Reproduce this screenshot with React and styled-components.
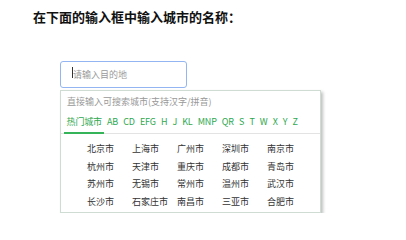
import styled, { createGlobalStyle } from 'styled-components';

const GlobalStyle = createGlobalStyle`
  body {
    margin: 0;
    background: #fff;
    font-family: "Noto Sans CJK SC", "Noto Sans", sans-serif;
  }
`;

const tabs = ['热门城市', 'AB', 'CD', 'EFG', 'H', 'J', 'KL', 'MNP', 'QR', 'S', 'T', 'W', 'X', 'Y', 'Z'];

const cities = [
  '北京市', '上海市', '广州市', '深圳市', '南京市',
  '杭州市', '天津市', '重庆市', '成都市', '青岛市',
  '苏州市', '无锡市', '常州市', '温州市', '武汉市',
  '长沙市', '石家庄市', '南昌市', '三亚市', '合肥市',
];

const App = () => {
  return (
    <Page>
      <GlobalStyle />
      <Title>在下面的输入框中输入城市的名称：</Title>
      <SearchBox>
        <InputWrap>
          <Caret />
          <CityInput placeholder='请输入目的地' />
        </InputWrap>
        <Panel>
          <Hint>直接输入可搜索城市(支持汉字/拼音)</Hint>
          <TabRow>
            {tabs.map((t, idx) => (
              <Tab key={t} $active={idx === 0}>
                {t}
              </Tab>
            ))}
          </TabRow>
          <CityGrid>
            {cities.map((c) => (
              <City key={c}>{c}</City>
            ))}
          </CityGrid>
        </Panel>
      </SearchBox>
    </Page>
  );
};

const Page = styled.div`
  padding: 9px 0 0 33px;
`;

const Title = styled.h3`
  margin: 0;
  font-size: 13px;
  line-height: 16px;
  font-weight: 700;
  color: #111;
`;

const SearchBox = styled.div`
  margin: 34px 0 0 27px;
  width: 262px;
`;

const InputWrap = styled.div`
  position: relative;
  width: 127px;
  height: 27px;
`;

const Caret = styled.span`
  position: absolute;
  left: 12px;
  top: 8px;
  width: 1px;
  height: 11px;
  background: #333;
`;

const CityInput = styled.input`
  box-sizing: border-box;
  width: 100%;
  height: 100%;
  border: 1px solid #93b6f2;
  border-radius: 3px;
  padding: 0 0 0 12px;
  font-family: inherit;
  font-size: 9px;
  outline: none;
  &::placeholder {
    color: #9a9a9a;
  }
`;

const Panel = styled.div`
  box-sizing: border-box;
  margin-top: 4px;
  width: 261px;
  height: 123px;
  border: 1px solid #cfdcd4;
  box-shadow: 2px 2px 3px rgba(0, 0, 0, 0.25);
  background: #fff;
`;

const Hint = styled.div`
  padding: 4px 0 0 6px;
  height: 14px;
  font-size: 9px;
  line-height: 14px;
  color: #999;
`;

const TabRow = styled.div`
  display: flex;
  margin-top: 6px;
  padding-left: 3px;
  border-bottom: 1px solid #e3e3e3;
`;

const Tab = styled.div`
  padding: 0 2.6px 3px;
  font-size: 9px;
  line-height: 14px;
  letter-spacing: -0.2px;
  color: #2ea84f;
  border-bottom: 2px solid ${({ $active }) => ($active ? '#35b45a' : 'transparent')};
  margin-bottom: -1px;
  cursor: pointer;
`;

const CityGrid = styled.div`
  display: grid;
  grid-template-columns: repeat(5, 45px);
  grid-auto-rows: 17.5px;
  padding: 6px 0 0 26px;
`;

const City = styled.div`
  font-size: 9px;
  line-height: 17.5px;
  color: #333;
  cursor: pointer;
`;

export default App;
